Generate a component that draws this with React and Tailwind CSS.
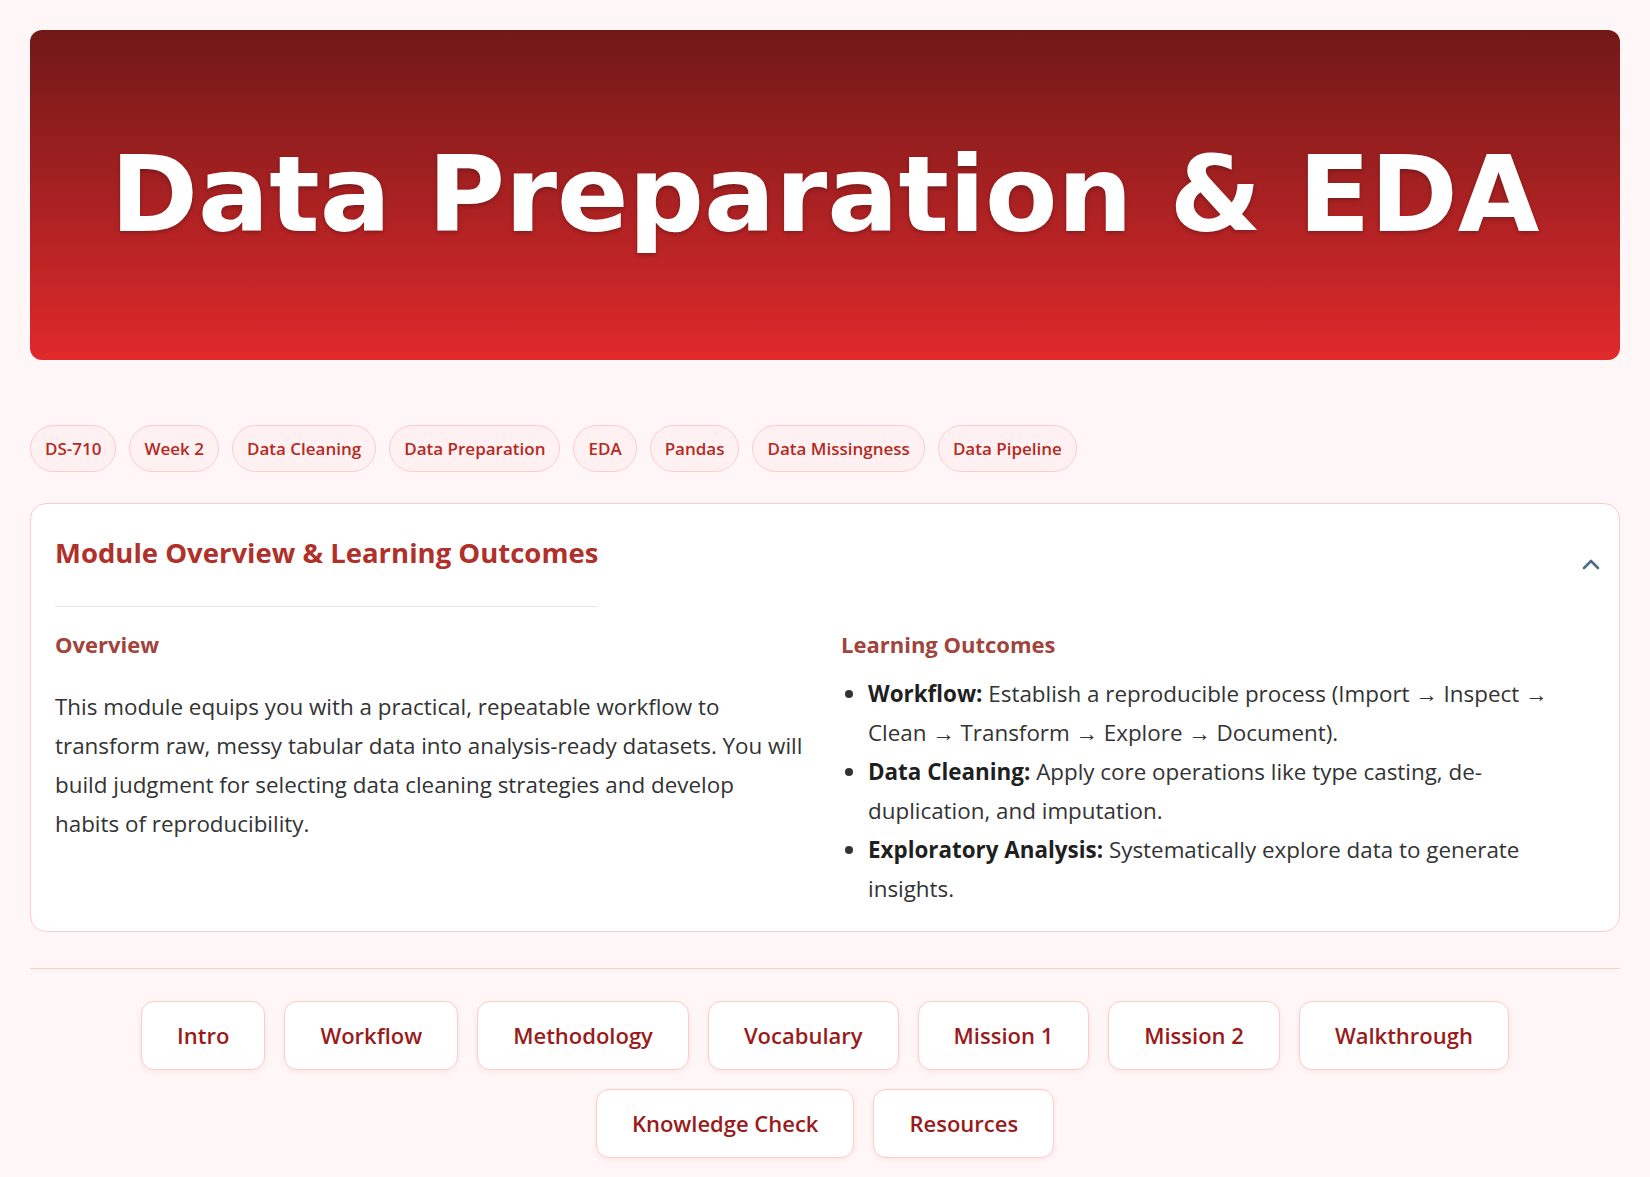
import React from "react";

const tags = ["DS-710", "Week 2", "Data Cleaning", "Data Preparation", "EDA", "Pandas", "Data Missingness", "Data Pipeline"];
const navs = ["Intro", "Workflow", "Methodology", "Vocabulary", "Mission 1", "Mission 2", "Walkthrough", "Knowledge Check", "Resources"];

export default function App() {
  return (
    <div className="min-h-screen bg-[#fff7f7] px-[30px] pt-[30px] pb-[20px]" style={{ fontFamily: '"Open Sans", "Noto Sans", sans-serif' }}>
      <header className="h-[330px] rounded-[12px] bg-gradient-to-b from-[#721818] to-[#e1292b] flex items-center justify-center">
        <h1
          className="text-white font-bold text-[105.5px] leading-none [text-shadow:0_2px_4px_rgba(0,0,0,0.25)]"
          style={{ fontFamily: '"DejaVu Sans", sans-serif' }}
        >
          Data Preparation &amp; EDA
        </h1>
      </header>

      <div className="mt-[65px] flex flex-wrap gap-[13px]">
        {tags.map((t) => (
          <span key={t} className="h-[47px] px-[14px] flex items-center rounded-full border border-[#fecaca] bg-[#fff1f1] text-[#b42a24] text-[17px] font-semibold">
            {t}
          </span>
        ))}
      </div>

      <section className="mt-[31px] rounded-[16px] border border-[#fecaca] bg-white px-[24px] pt-[24px] pb-[23px]">
        <div className="flex items-center justify-between">
          <h2 className="text-[27.5px] font-bold text-[#b0302a] leading-[1.2] pt-[8px] pb-[37px] border-b border-[#e5e7eb]">
            Module Overview &amp; Learning Outcomes
          </h2>
          <svg width="18" height="12" viewBox="0 0 18 12" className="mr-[-5px] mt-[-8px]">
            <polyline points="2,10 9,3 16,10" fill="none" stroke="#4f6a8a" strokeWidth="2.6" strokeLinecap="round" strokeLinejoin="round" />
          </svg>
        </div>

        <div className="grid grid-cols-2 gap-[32px] mt-[22px]">
          <div>
            <h3 className="text-[22px] font-bold text-[#a0443c] leading-[30px]">Overview</h3>
            <p className="mt-[28px] text-[22.4px] leading-[39px] text-[#333333]">
              This module equips you with a practical, repeatable workflow to transform raw, messy tabular data into analysis-ready datasets. You will build judgment for selecting data cleaning strategies and develop{" "}
              <br />
              habits of reproducibility.
            </p>
          </div>
          <div>
            <h3 className="text-[22px] font-bold text-[#a0443c] leading-[30px]">Learning Outcomes</h3>
            <ul className="mt-[15px] list-disc pl-[27px] pr-[30px] text-[22.4px] leading-[39px] text-[#333333]">
              <li><strong className="text-[#1f1f1f]">Workflow:</strong> Establish a reproducible process (Import → Inspect → Clean → Transform → Explore → Document).</li>
              <li><strong className="text-[#1f1f1f]">Data Cleaning:</strong> Apply core operations like type casting, de-duplication, and imputation.</li>
              <li><strong className="text-[#1f1f1f]">Exploratory Analysis:</strong> Systematically explore data to generate insights.</li>
            </ul>
          </div>
        </div>
      </section>

      <div className="mt-[36px] border-t border-[#fecaca]" />

      <nav className="mt-[32px] flex flex-wrap justify-center gap-[19px]">
        {navs.map((n) => (
          <button key={n} className="h-[69px] px-[35px] rounded-[13px] border border-[#fecaca] bg-white text-[#991b1b] text-[22px] font-semibold shadow-[0_2px_6px_rgba(220,38,38,0.08)]">
            {n}
          </button>
        ))}
      </nav>
    </div>
  );
}
